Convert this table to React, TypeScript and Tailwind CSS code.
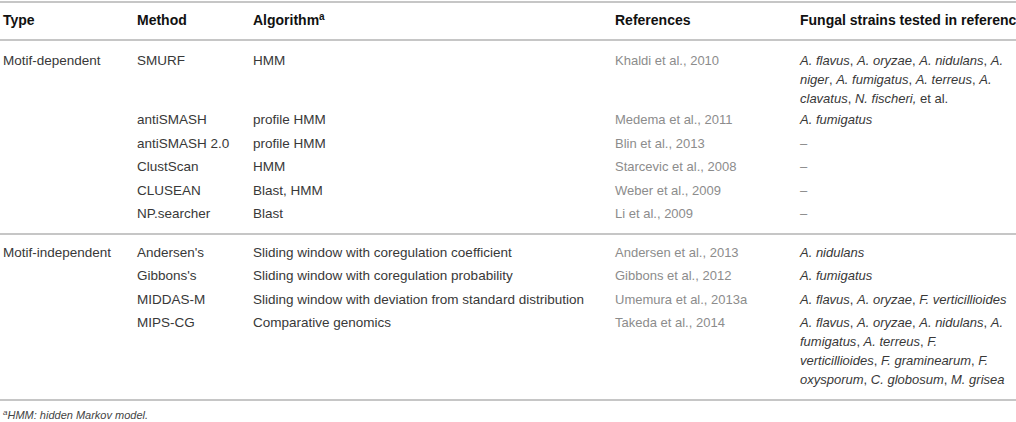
import type { ReactNode } from 'react'

// Comparison table of cluster-prediction methods

const I = ({ children }: { children: ReactNode }) => <i className="italic">{children}</i>

interface RowData {
  type?: string
  method: string
  algorithm: string
  reference: string
  strains: ReactNode
  pad: string
  last?: boolean
}

const Dash = () => <span className="text-[#888]">–</span>

const rows: RowData[] = [
  {
    type: 'Motif-dependent',
    method: 'SMURF',
    algorithm: 'HMM',
    reference: 'Khaldi et al., 2010',
    strains: (
      <>
        <I>A. flavus</I>, <I>A. oryzae</I>, <I>A. nidulans</I>, <I>A.</I>
        <br />
        <I>niger</I>, <I>A. fumigatus</I>, <I>A. terreus</I>, <I>A.</I>
        <br />
        <I>clavatus</I>, <I>N. fischeri,</I> et al.
      </>
    ),
    pad: 'pt-[10px] pb-0',
  },
  { method: 'antiSMASH', algorithm: 'profile HMM', reference: 'Medema et al., 2011', strains: <I>A. fumigatus</I>, pad: 'pt-[2px] pb-[2.5px]' },
  { method: 'antiSMASH 2.0', algorithm: 'profile HMM', reference: 'Blin et al., 2013', strains: <Dash />, pad: 'pt-[2px] pb-[2.5px]' },
  { method: 'ClustScan', algorithm: 'HMM', reference: 'Starcevic et al., 2008', strains: <Dash />, pad: 'pt-[2px] pb-[2.5px]' },
  { method: 'CLUSEAN', algorithm: 'Blast, HMM', reference: 'Weber et al., 2009', strains: <Dash />, pad: 'pt-[2px] pb-[2.5px]' },
  { method: 'NP.searcher', algorithm: 'Blast', reference: 'Li et al., 2009', strains: <Dash />, pad: 'pt-[2px] pb-[10px]', last: true },
  {
    type: 'Motif-independent',
    method: "Andersen's",
    algorithm: 'Sliding window with coregulation coefficient',
    reference: 'Andersen et al., 2013',
    strains: <I>A. nidulans</I>,
    pad: 'pt-[7.5px] pb-[2.5px]',
  },
  { method: "Gibbons's", algorithm: 'Sliding window with coregulation probability', reference: 'Gibbons et al., 2012', strains: <I>A. fumigatus</I>, pad: 'pt-[2px] pb-[2.5px]' },
  {
    method: 'MIDDAS-M',
    algorithm: 'Sliding window with deviation from standard distribution',
    reference: 'Umemura et al., 2013a',
    strains: (
      <>
        <I>A. flavus</I>, <I>A. oryzae</I>, <I>F. verticillioides</I>
      </>
    ),
    pad: 'pt-[2px] pb-[2.5px]',
  },
  {
    method: 'MIPS-CG',
    algorithm: 'Comparative genomics',
    reference: 'Takeda et al., 2014',
    strains: (
      <>
        <I>A. flavus</I>, <I>A. oryzae</I>, <I>A. nidulans</I>, <I>A.</I>
        <br />
        <I>fumigatus</I>, <I>A. terreus</I>, <I>F.</I>
        <br />
        <I>verticillioides</I>, <I>F. graminearum</I>, <I>F.</I>
        <br />
        <I>oxysporum</I>, <I>C. globosum</I>, <I>M. grisea</I>
      </>
    ),
    pad: 'pt-[2px] pb-[10px]',
    last: true,
  },
]

export default function App() {
  return (
    <div
      className="w-[1016px] h-[422px] overflow-hidden bg-white pt-px text-[13px] leading-[19px] text-[#383838]"
      style={{ fontFamily: '"Liberation Sans", Arial, sans-serif' }}
    >
      <table className="table-fixed border-collapse w-[1060px]">
        <colgroup>
          <col className="w-[137px]" />
          <col className="w-[116px]" />
          <col className="w-[362px]" />
          <col className="w-[185px]" />
          <col className="w-[260px]" />
        </colgroup>
        <thead>
          <tr className="border-t-2 border-b-2 border-[#c6c6c6] text-left text-[14px] font-bold text-[#111]">
            <th className="pl-[3px] pt-[8px] pb-[9px] font-bold">Type</th>
            <th className="pt-[8px] pb-[9px] font-bold">Method</th>
            <th className="pt-[8px] pb-[9px] font-bold">
              Algorithm<sup className="text-[10px]">a</sup>
            </th>
            <th className="pt-[8px] pb-[9px] font-bold">References</th>
            <th className="pt-[8px] pb-[9px] font-bold whitespace-nowrap">Fungal strains tested in reference</th>
          </tr>
        </thead>
        <tbody>
          {rows.map((r) => (
            <tr key={r.method} className={`align-top ${r.last ? 'border-b-2 border-[#c6c6c6]' : ''}`}>
              <td className={`pl-[3px] text-[13.5px] ${r.pad}`}>{r.type ?? ''}</td>
              <td className={`text-[13.5px] ${r.pad}`}>{r.method}</td>
              <td className={`whitespace-nowrap text-[13.5px] ${r.pad}`}>{r.algorithm}</td>
              <td className={`text-[#8c8c8c] ${r.pad}`}>{r.reference}</td>
              <td className={`whitespace-nowrap ${r.pad}`}>{r.strains}</td>
            </tr>
          ))}
        </tbody>
      </table>
      <p className="pl-[3px] pt-[7px] text-[11px] leading-[14px] italic text-[#444]">
        <sup className="text-[8px]">a</sup>
        <span>HMM: hidden Markov model.</span>
      </p>
    </div>
  )
}
